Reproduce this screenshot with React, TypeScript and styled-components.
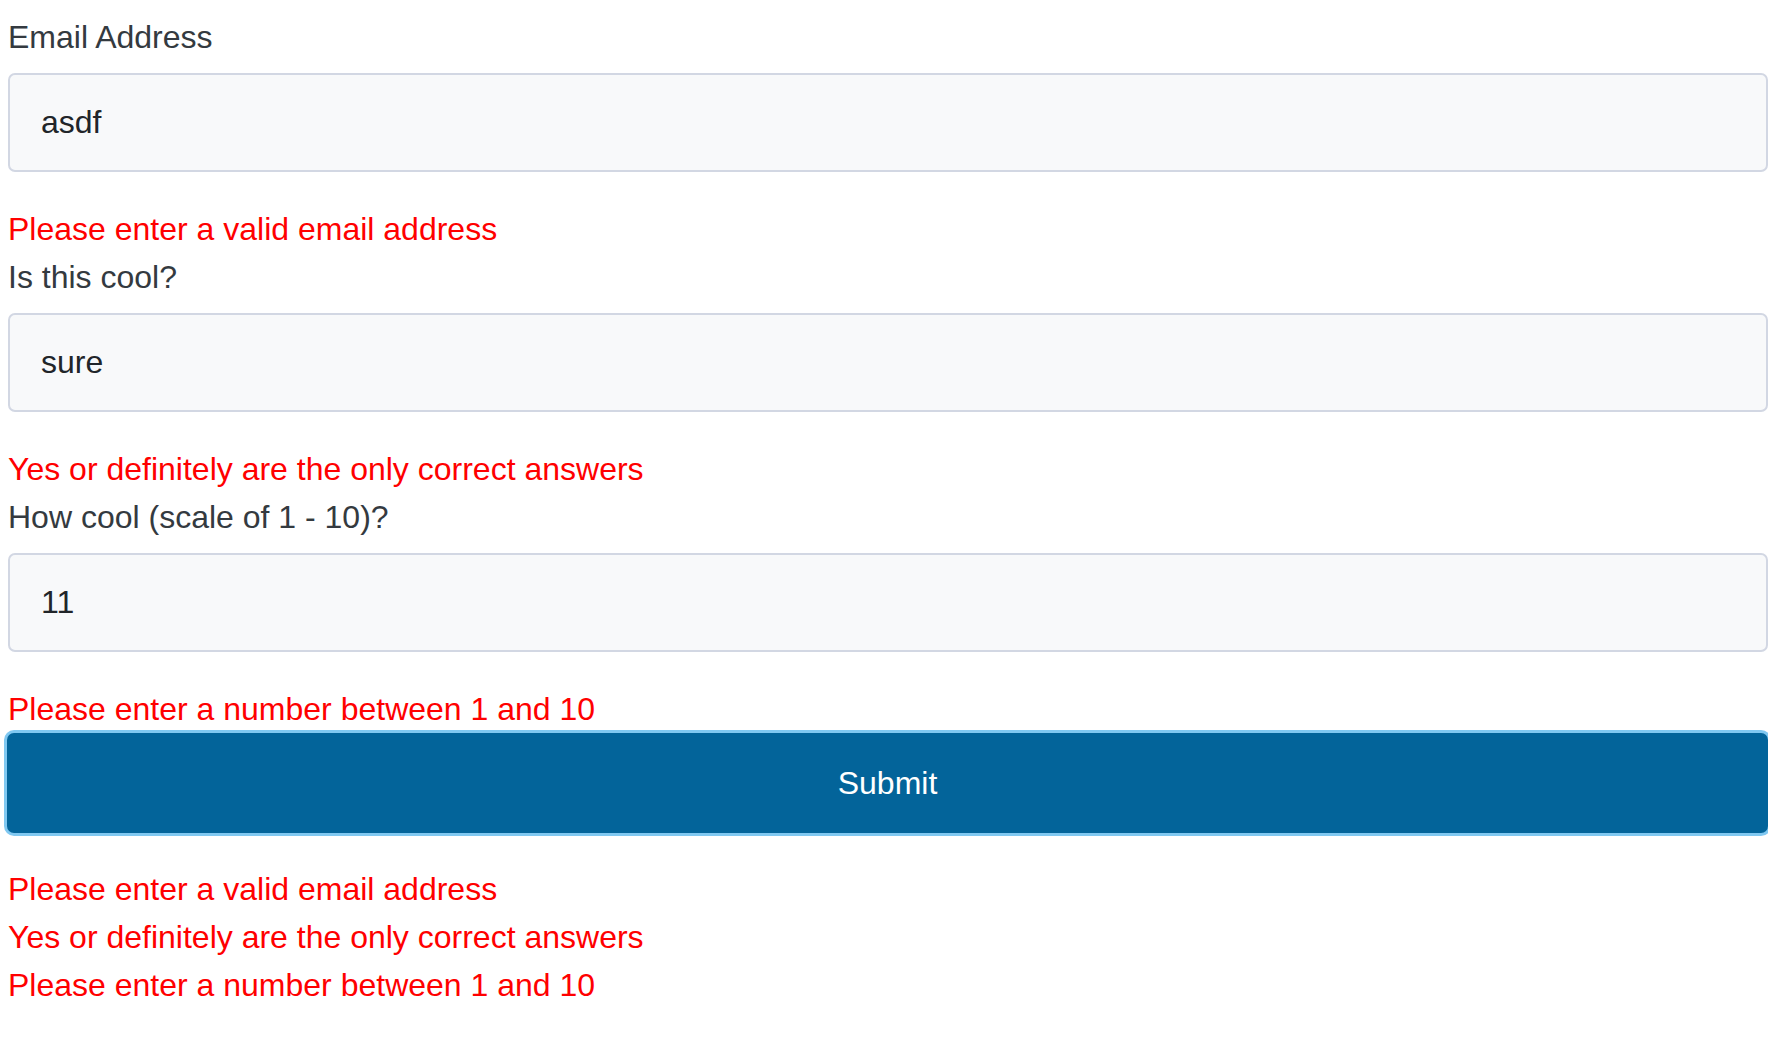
import React from "react";
import styled, { createGlobalStyle } from "styled-components";

const fields = [
  {
    id: "email",
    label: "Email Address",
    value: "asdf",
    error: "Please enter a valid email address",
  },
  {
    id: "cool",
    label: "Is this cool?",
    value: "sure",
    error: "Yes or definitely are the only correct answers",
  },
  {
    id: "howCool",
    label: "How cool (scale of 1 - 10)?",
    value: "11",
    error: "Please enter a number between 1 and 10",
  },
];

const App = () => (
  <>
    <GlobalStyle />
    <Form onSubmit={e => e.preventDefault()}>
      {fields.map(field => (
        <Field key={field.id}>
          <Label htmlFor={field.id}>{field.label}</Label>
          <TextInput id={field.id} defaultValue={field.value} />
          <ErrorText>{field.error}</ErrorText>
        </Field>
      ))}
      <SubmitButton type="submit">Submit</SubmitButton>
      <Summary>
        {fields.map(field => (
          <ErrorText key={field.id}>{field.error}</ErrorText>
        ))}
      </Summary>
    </Form>
  </>
);

// Styles

const GlobalStyle = createGlobalStyle`
  html, body {
    margin: 0;
    padding: 0;
    background: #ffffff;
  }

  body {
    font-family: "Liberation Sans", Arial, sans-serif;
    font-size: 32px;
    line-height: 48px;
  }
`;

const Form = styled.form`
  display: flex;
  flex-direction: column;
  padding: 13px 0 0 8px;
`;

const Field = styled.div`
  display: flex;
  flex-direction: column;
`;

const Label = styled.label`
  color: #343a40;
  height: 48px;
`;

const TextInput = styled.input`
  box-sizing: border-box;
  width: 100%;
  height: 99px;
  margin: 12px 0 33px;
  padding: 0 0 0 31px;
  border: 2px solid #d2d7e3;
  border-radius: 7px;
  background: #f8f9fa;
  color: #212529;
  font-family: inherit;
  font-size: 32px;
  outline: none;
`;

const ErrorText = styled.div`
  color: #ff0000;
  height: 48px;
`;

const SubmitButton = styled.button`
  box-sizing: border-box;
  width: calc(100% + 1px);
  height: 100px;
  margin: 0 0 32px -1px;
  border: none;
  border-radius: 7px;
  background: #03649a;
  color: #ffffff;
  font-family: inherit;
  font-size: 32px;
  box-shadow: 0 0 0 3px #80c8f1;
  cursor: pointer;
`;

const Summary = styled.div`
  display: flex;
  flex-direction: column;
`;

// Export

export default App;
